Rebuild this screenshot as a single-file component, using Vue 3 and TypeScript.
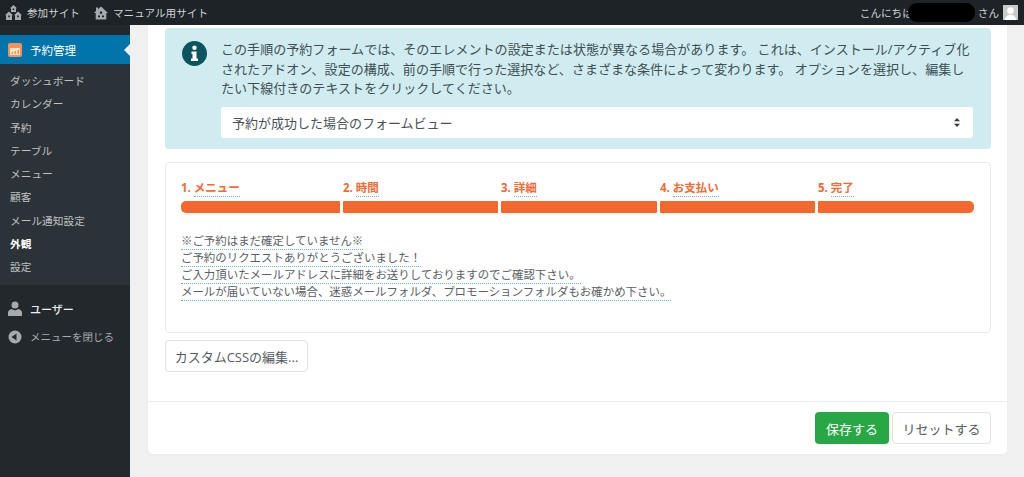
<script setup lang="ts">
const menu: string[] = ['ダッシュボード','カレンダー','予約','テーブル','メニュー','顧客','メール通知設定','外観','設定']
const steps: string[] = ['メニュー','時間','詳細','お支払い','完了']
const lines: string[] = [
  '※ご予約はまだ確定していません※',
  'ご予約のリクエストありがとうございました！',
  'ご入力頂いたメールアドレスに詳細をお送りしておりますのでご確認下さい。',
  'メールが届いていない場合、迷惑メールフォルダ、プロモーションフォルダもお確かめ下さい。'
]
</script>

<template>
  <div class="page">
    <header class="bar">
      <div class="bar-left">
        <span class="bar-item">
          <svg width="17" height="15" viewBox="0 0 17 15"><path fill="#a7aaad" fill-rule="evenodd" d="M8.500 0l3.500 3.300h-1V7H6V3.300H5zM7.700 3.500v1.600h1.600V3.500zM4 6.500l4 3.700H7V15H1v-4.800H0zM3.200 10.500v1.700h1.600v-1.700zM13 6.500l4 3.700h-1V15h-6v-4.800H9zM12.200 10.500v1.700h1.600v-1.700z"/></svg>
          参加サイト
        </span>
        <span class="bar-item second">
          <svg width="14" height="14" viewBox="0 0 14 14"><path fill="#a7aaad" fill-rule="evenodd" d="M7 .5l7 6.500h-1.700v6.500H1.700V7H0l2-1.900V1.500h2v1.800zM5.900 5.500v2.200h2.200V5.500zM4 9.500v1.800h2V9.500zM8 9.500v1.800h2V9.500z"/></svg>
          マニュアル用サイト
        </span>
      </div>
      <div class="bar-right">
        <span class="hello">こんにちは</span>
        <span class="mask"></span>
        <span class="san">さん</span>
        <span class="avatar">
          <svg width="15" height="15" viewBox="0 0 16 16"><circle cx="8" cy="6" r="3.500" fill="#fff"/><path fill="#fff" d="M2 16c.5-4 3-5.500 6-5.500s5.500 1.500 6 5.500z"/></svg>
        </span>
      </div>
    </header>

    <div class="body">
      <aside class="side">
        <div class="current">
          <svg class="cal" width="14" height="14" viewBox="0 0 14 14"><rect width="14" height="14" rx="2" fill="#f4925a"/><rect x="2" y="5" width="10" height="7" fill="#fbe3c8"/><path fill="#f4925a" d="M3.500 9h1.500v2H3.500zM6.500 8h1.500v3H6.500zM9.500 7h1.500v4H9.500z"/></svg>
          <span>予約管理</span>
          <i class="notch"></i>
        </div>
        <ul class="sub">
          <li v-for="m in menu" :key="m" :class="{ on: m === '外観' }">{{ m }}</li>
        </ul>
        <div class="user">
          <svg width="14" height="15" viewBox="0 0 14 15"><circle cx="7" cy="4" r="3.500" fill="#a7aaad"/><path fill="#a7aaad" d="M0 15v-3.500C0 9.500 2 8.500 3.500 8L7 9.500 10.500 8C12 8.500 14 9.500 14 11.500V15z"/></svg>
          <span>ユーザー</span>
        </div>
        <div class="close">
          <svg width="14" height="14" viewBox="0 0 14 14"><circle cx="7" cy="7" r="6.500" fill="#a7aaad"/><path fill="#23282d" d="M8.500 3.500v7L3.500 7z"/></svg>
          <span>メニューを閉じる</span>
        </div>
      </aside>

      <main class="main">
        <section class="card">
          <div class="inner">
            <div class="alert">
              <svg class="info" width="25" height="25" viewBox="0 0 25 25">
                <circle cx="12.500" cy="12.500" r="12.500" fill="#0c5460"/>
                <circle cx="12.500" cy="6.800" r="2.200" fill="#fff"/>
                <path fill="#fff" d="M9.500 10.500h5v7h1.500v2.500H9v-2.500h1.500v-4.500h-1z"/>
              </svg>
              <div class="alert-body">
                <p>この手順の予約フォームでは、そのエレメントの設定または状態が異なる場合があります。 これは、インストール/アクティブ化されたアドオン、設定の構成、前の手順で行った選択など、さまざまな条件によって変わります。 オプションを選択し、編集したい下線付きのテキストをクリックしてください。</p>
                <div class="select">
                  <span>予約が成功した場合のフォームビュー</span>
                  <svg width="8" height="11" viewBox="0 0 8 11"><path fill="#343a40" d="M4 1l3 3.300H1zM4 10L1 6.700h6z"/></svg>
                </div>
              </div>
            </div>

            <div class="preview">
              <div class="steps">
                <div v-for="(s, i) in steps" :key="s" class="step">
                  <div class="step-label">{{ i + 1 }}. <span class="dot">{{ s }}</span></div>
                  <div class="step-bar"></div>
                </div>
              </div>
              <div class="message">
                <div v-for="l in lines" :key="l"><span class="dot">{{ l }}</span></div>
              </div>
            </div>

            <button class="css-btn">カスタムCSSの編集...</button>
          </div>
          <footer class="foot">
            <button class="save">保存する</button>
            <button class="reset">リセットする</button>
          </footer>
        </section>
      </main>
    </div>
  </div>
</template>

<style>
html, body { margin: 0; height: 100%; overflow: hidden; }
</style>

<style scoped>
.page {
  width: 1024px;
  height: 477px;
  overflow: hidden;
  display: flex;
  flex-direction: column;
  background: #f0f0f1;
  font-family: "Open Sans", "Noto Sans CJK JP", sans-serif;
  color: #3c434a;
}
.bar {
  height: 25px;
  flex: none;
  background: #1d2327;
  color: #d0d2d4;
  font-size: 10.600px;
  display: flex;
  align-items: center;
  justify-content: space-between;
  padding: 0 6px 0 5px;
}
.bar-left, .bar-right, .bar-item { display: flex; align-items: center; }
.bar-item { gap: 5px; }
.second { margin-left: 14px; }
.hello { white-space: nowrap; }
.mask {
  position: relative;
  width: 67px;
  height: 19px;
  border-radius: 9px;
  background: #000;
  margin: 0 3px 0 -5px;
}
.san { margin-right: 4px; }
.avatar {
  width: 15px;
  height: 15px;
  background: #c9cacb;
  display: flex;
  overflow: hidden;
}
.body { flex: 1; display: flex; min-height: 0; }
.side {
  width: 130px;
  flex: none;
  background: #23282d;
  color: #c3c4c7;
  font-size: 10.700px;
}
.current {
  position: relative;
  margin-top: 10px;
  height: 29px;
  background: #0073aa;
  color: #fff;
  display: flex;
  align-items: center;
  gap: 8px;
  padding-left: 8px;
  font-size: 11.500px;
}
.notch {
  position: absolute;
  right: 0;
  top: 9px;
  border: 6px solid transparent;
  border-right-color: #f0f0f1;
  border-left-width: 0;
}
.sub {
  list-style: none;
  margin: 0;
  padding: 6px 0 5px;
  background: #2c3338;
}
.sub li {
  height: 23.300px;
  line-height: 23.300px;
  padding-left: 10px;
  color: #bfc1c3;
}
.sub li.on { color: #fff; font-weight: 700; }
.user, .close {
  display: flex;
  align-items: center;
  gap: 8px;
  padding-left: 8px;
  height: 28px;
}
.user {
  margin-top: 10px;
  color: #eceded;
  font-weight: 500;
  font-size: 11px;
}
.close { color: #a7aaad; font-size: 10.500px; }
.main { flex: 1; min-width: 0; padding: 0 17px 0 18px; }
.card {
  height: 429px;
  background: #fff;
  border-radius: 0 0 5px 5px;
  box-shadow: 0 0 1px rgba(0, 0, 0, .08);
  display: flex;
  flex-direction: column;
}
.inner { flex: 1; padding: 3px 16px 0 17px; }
.alert {
  height: 121px;
  box-sizing: border-box;
  background: #d1ecf1;
  border-radius: 4px;
  padding: 12px 18px 12px 17px;
  display: flex;
  gap: 14px;
  color: #3d4f53;
}
.info { flex: none; margin-top: 1px; }
.alert-body { flex: 1; min-width: 0; }
.alert-body p {
  margin: 0 0 8px;
  font-size: 13.050px;
  line-height: 19.500px;
}
.select {
  height: 31px;
  background: #fff;
  border-radius: 3px;
  display: flex;
  align-items: center;
  justify-content: space-between;
  padding: 0 12px 0 11px;
  font-size: 13px;
  color: #495057;
}
.preview {
  margin-top: 13px;
  height: 171px;
  box-sizing: border-box;
  border: 1px solid #e8eaeb;
  border-radius: 4px;
  padding: 16px 16px 0 15px;
}
.steps {
  display: grid;
  grid-template-columns: 159px 155px 156px 155px 156px;
  gap: 3px;
}
.step { min-width: 0; }
.step-label {
  font-size: 11.500px;
  font-weight: 700;
  color: #ee6c35;
  height: 22px;
  line-height: 18px;
  white-space: nowrap;
}
.step-bar { height: 12px; background: #f4682e; border-radius: 1px; }
.step:first-child .step-bar { border-radius: 5px 1px 1px 5px; }
.step:last-child .step-bar { border-radius: 1px 5px 5px 1px; }
.dot { border-bottom: 1px dotted #6fb3cc; padding-bottom: 1px; }
.message {
  margin-top: 19px;
  font-size: 11.450px;
  line-height: 17px;
  color: #5a6064;
  white-space: nowrap;
}
.css-btn, .reset {
  background: #fff;
  border: 1px solid #dfe1e3;
  border-radius: 4px;
  color: #555b60;
  font-family: inherit;
}
.css-btn {
  display: block;
  margin-top: 7px;
  height: 32px;
  width: 143px;
  padding: 0;
  font-size: 13px;
}
.foot {
  height: 53px;
  flex: none;
  box-sizing: border-box;
  border-top: 1px solid #eceeef;
  display: flex;
  justify-content: flex-end;
  align-items: flex-start;
  gap: 3px;
  padding: 10px 16px 0 0;
}
.save, .reset {
  height: 32px;
  padding: 0;
  font-family: inherit;
  font-size: 13px;
}
.save {
  width: 74px;
  background: #28a745;
  color: #fff;
  border: 0;
  border-radius: 4px;
}
.reset { width: 99px; }
</style>
